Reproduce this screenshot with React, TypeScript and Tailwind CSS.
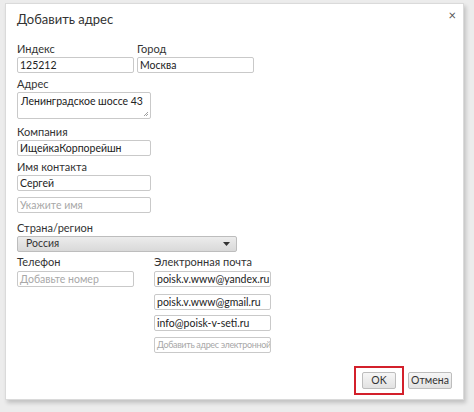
import React from "react";

// Chrome-style "add address" dialog
const font = { fontFamily: 'Lato, "Noto Sans", sans-serif' };

const Label = ({ children, className = "" }: { children: React.ReactNode; className?: string }) => (
  <div className={`h-[14px] text-[11px] leading-[14px] text-[#333] ${className}`}>{children}</div>
);

const Field = ({
  value,
  placeholder,
  className = "",
}: {
  value?: string;
  placeholder?: string;
  className?: string;
}) => (
  <div
    className={`h-[16px] border border-[#c9c9c9] rounded-[2px] bg-white px-[2px] leading-[14px] whitespace-nowrap overflow-hidden ${
      value ? "text-[#222]" : "text-[#a8a8a8]"
    } ${className}`}
  >
    {value || placeholder}
  </div>
);

const Btn = ({ children, className = "" }: { children: React.ReactNode; className?: string }) => (
  <div
    className={`h-[17px] flex items-center justify-center border border-[#bdbdbd] rounded-[2px] bg-gradient-to-b from-[#f6f6f6] to-[#e2e2e2] text-[10.5px] text-[#333] ${className}`}
  >
    {children}
  </div>
);

export default function App() {
  return (
    <div className="w-[474px] h-[412px] bg-[#ececec] pt-[3px] pl-[5px] overflow-hidden" style={font}>
      <div className="relative w-[459px] h-[397px] bg-white border border-[#dadada] shadow-[2px_3px_4px_rgba(0,0,0,0.18)] flex flex-col pl-[11px]">
        <div className="absolute right-[7px] top-[5px] text-[13px] leading-[13px] text-[#555]">×</div>

        <div className="mt-[6px] h-[18px] text-[13px] leading-[18px] text-[#333]">Добавить адрес</div>

        <div className="mt-[14px] flex gap-[3px]">
          <div className="flex flex-col gap-[1px]">
            <Label>Индекс</Label>
            <Field value="125212" className="w-[117px] text-[10.5px]" />
          </div>
          <div className="flex flex-col gap-[1px]">
            <Label>Город</Label>
            <Field value="Москва" className="w-[117px] text-[10.5px]" />
          </div>
        </div>

        <Label className="mt-[4px]">Адрес</Label>
        <div className="relative mt-[1px] w-[134px] h-[27px] border border-[#c9c9c9] rounded-[2px] px-[3px] pt-[1px] text-[10.5px] leading-[14px] text-[#222] whitespace-nowrap">
          Ленинградское шоссе 43
          <svg className="absolute right-[1px] bottom-[1px]" width="6" height="6" viewBox="0 0 6 6">
            <path d="M5 1 L1 5 M5 3 L3 5" stroke="#888" strokeWidth="0.8" />
          </svg>
        </div>

        <Label className="mt-[6px]">Компания</Label>
        <Field value="ИщейкаКорпорейшн" className="mt-[1px] w-[134px] text-[10.5px]" />

        <Label className="mt-[4px]">Имя контакта</Label>
        <Field value="Сергей" className="mt-[1px] w-[134px] text-[10.5px]" />
        <Field placeholder="Укажите имя" className="mt-[6px] w-[134px] text-[10.5px]" />

        <Label className="mt-[8px]">Страна/регион</Label>
        <div className="mt-[1px] w-[220px] h-[16px] border border-[#bdbdbd] rounded-[2px] bg-gradient-to-b from-[#ececec] to-[#d9d9d9] flex items-center justify-between pl-[8px] pr-[6px] text-[10.5px] text-[#333]">
          <span>Россия</span>
          <svg width="7" height="4" viewBox="0 0 7 4">
            <path d="M0 0 H7 L3.5 4 Z" fill="#333" />
          </svg>
        </div>

        <div className="mt-[3px] flex gap-[20px]">
          <div className="flex flex-col gap-[2px]">
            <Label>Телефон</Label>
            <Field placeholder="Добавьте номер" className="w-[117px] text-[10.5px]" />
          </div>
          <div className="flex flex-col gap-[2px]">
            <Label>Электронная почта</Label>
            <Field value="poisk.v.www@yandex.ru" className="w-[117px] text-[10.5px]" />
            <Field value="poisk.v.www@gmail.ru" className="mt-[5px] w-[117px] text-[10.5px]" />
            <Field value="info@poisk-v-seti.ru" className="mt-[3px] w-[117px] text-[10.5px]" />
            <Field
              placeholder="Добавить адрес электронной"
              className="mt-[4px] w-[117px] text-[9px] tracking-[-0.35px] px-[1px]"
            />
          </div>
        </div>

        <div className="mt-auto mb-[4px] mr-[11px] flex justify-end items-center gap-[4px]">
          <div className="border-2 border-[#d3202b] px-[6px] py-[4px]">
            <Btn className="w-[34px]">OK</Btn>
          </div>
          <Btn className="w-[44px]">Отмена</Btn>
        </div>
      </div>
    </div>
  );
}
